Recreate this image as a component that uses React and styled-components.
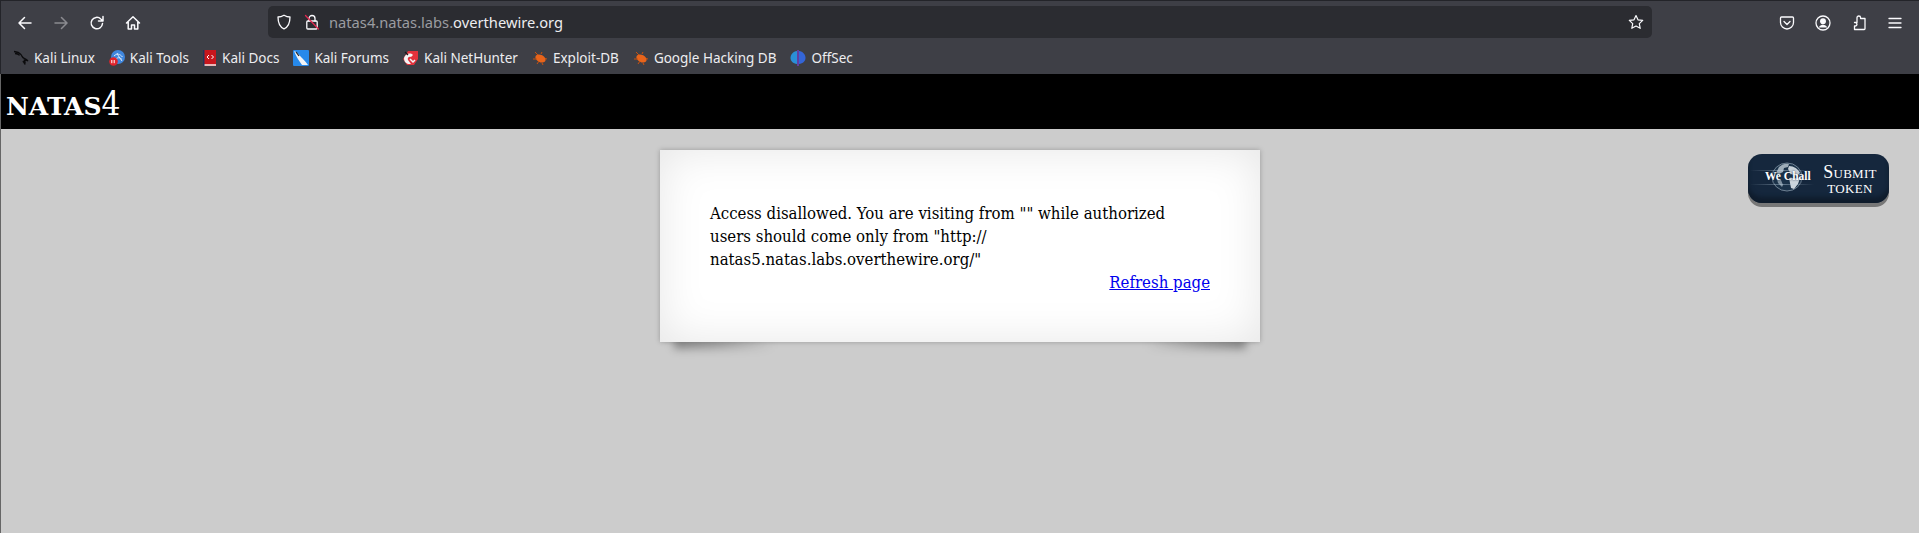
import React from 'react'
import styled, { createGlobalStyle } from 'styled-components'

const Global = createGlobalStyle`
  html, body { margin: 0; padding: 0; height: 100%; background: #ccc; overflow: hidden; }
  #root { height: 100%; }
`

const bookmarks = [
  { name: 'Kali Linux', icon: <KaliIcon /> },
  { name: 'Kali Tools', icon: <ToolsIcon /> },
  { name: 'Kali Docs', icon: <DocsIcon /> },
  { name: 'Kali Forums', icon: <ForumsIcon /> },
  { name: 'Kali NetHunter', icon: <HunterIcon /> },
  { name: 'Exploit-DB', icon: <BugIcon /> },
  { name: 'Google Hacking DB', icon: <BugIcon /> },
  { name: 'OffSec', icon: <OffSecIcon /> },
]

function KaliIcon() {
  return (
    <svg width="16" height="16" viewBox="0 0 16 16" fill="none" stroke="#0b0b0d" strokeWidth="1.3">
      <path d="M1 1.5c3 .3 5.5 1.300 7 3.200 1.200 1.600 1.400 3 3.200 3.700 1.400.6 2.800 1 3.800 2.600-1.400-.8-2.600-1-3.600-.8.8 1.200 1 2.600.4 4.300-.2-1.500-.8-2.600-2-3.400" />
      <path d="M2 3.500c2 .1 3.500.7 4.600 1.900" />
    </svg>
  )
}

function ToolsIcon() {
  return (
    <svg width="16" height="16" viewBox="0 0 16 16">
      <circle cx="9" cy="7" r="7" fill="#3f86dc" />
      <path d="M5 6c3-3 6-2 8.500 1M7 9c2-2 4-1.500 6 .5M8 3c1 3 3 5 5 8" stroke="#d8e8fa" strokeWidth="1" fill="none" />
      <circle cx="4.500" cy="11.500" r="4.300" fill="#e0242c" />
      <path d="M2.800 10v3.200M5.200 10v3.200" stroke="#fff" strokeWidth="1" />
    </svg>
  )
}

function DocsIcon() {
  return (
    <svg width="14" height="16" viewBox="0 0 14 16">
      <rect x="1" y="0" width="12" height="14" fill="#c8161d" />
      <rect x="1" y="14" width="12" height="2" fill="#e8b8b8" />
      <rect x="0" y="0" width="1.500" height="16" fill="#24345c" />
      <path d="M6 5 4 7l2 2M8.500 5l2 2-2 2" stroke="#fff" strokeWidth="1" fill="none" />
    </svg>
  )
}

function ForumsIcon() {
  return (
    <svg width="16" height="16" viewBox="0 0 16 16">
      <rect width="16" height="16" rx="1" fill="#2789ea" />
      <path d="M1 1c3 1 5 4 7 6 2 2 4 4 7 8H9C6 11 3 6 1 1Z" fill="#f2f4f7" />
      <path d="M3 2l3 4" stroke="#222" strokeWidth="1.200" />
    </svg>
  )
}

function HunterIcon() {
  return (
    <svg width="16" height="16" viewBox="0 0 16 16">
      <path d="M5 1h10v8l-4 6H4L0 9Z" fill="#e2323c" />
      <path d="M1 8c1-4 6-6 9-3L8 7C6 6 4 8 5 10l3 4H5C2 13 1 11 1 8Z" fill="#f4f4f4" />
      <path d="M7 9l3 3 2-2" stroke="#f4f4f4" strokeWidth="1.500" fill="none" />
      <path d="M2 2l3 3" stroke="#18181c" strokeWidth="1.200" />
    </svg>
  )
}

function BugIcon() {
  return (
    <svg width="16" height="16" viewBox="0 0 16 16">
      <ellipse cx="8.500" cy="8.500" rx="5.500" ry="3.600" transform="rotate(28 8.500 8.500)" fill="#e8641b" />
      <path d="M3 2l3 3M1 9h4M5 14l2-3M10 13l1 2M15 9l-2-.5M9 4l1-2" stroke="#c9520f" strokeWidth="1" />
    </svg>
  )
}

function OffSecIcon() {
  return (
    <svg width="16" height="16" viewBox="0 0 16 16">
      <path d="M7 1C3 1.500.500 4.500.500 8c0 3 2.500 5.500 6.500 6Z" fill="#2a8fd8" />
      <path d="M9 1c4 .5 6.500 3.500 6.500 7 0 3-2.500 5.500-6.500 6Z" fill="#3465d8" />
      <path d="M8 0v16" stroke="#7a3fe0" strokeWidth="1.200" />
    </svg>
  )
}

function Line({ children, size = 16, sw = 1.500, color = '#fbfbfe' }) {
  return (
    <svg width={size} height={size} viewBox="0 0 16 16" fill="none" stroke={color} strokeWidth={sw} strokeLinecap="round" strokeLinejoin="round">
      {children}
    </svg>
  )
}

function Globe() {
  return (
    <svg width="32" height="30" viewBox="0 0 32 30">
      <ellipse cx="16" cy="15" rx="15" ry="14" fill="#1b3249" stroke="#8496a6" strokeWidth="0.800" />
      <path d="M8 5c3-3 7-4 10-3l-1 3-4 1-1 4-4 2-3-1Z" fill="#9eadb9" />
      <path d="M18 4c5 0 9 3 11 7l-3 3-6-2-3-5Z" fill="#c6d0d8" />
      <path d="M18 16h11l-2 6-4 5-3-1-1-5Z" fill="#cdd6dd" />
      <path d="M6 17l4 1 2 5-1 2-4-4Z" fill="#7f91a0" />
    </svg>
  )
}

export default function App() {
  return (
    <Window>
      <Global />
      <Toolbar>
        <NavButton>
          <Line><path d="M14 8H2.500M7.500 2.500 2 8l5.500 5.500" /></Line>
        </NavButton>
        <NavButton $off>
          <Line><path d="M2 8h11.500M8.500 2.500 14 8l-5.500 5.500" /></Line>
        </NavButton>
        <NavButton>
          <Line><path d="M13.500 8.500a5.700 5.700 0 1 1-1.700-4.500L14 6M14 1.500V6H9.500" /></Line>
        </NavButton>
        <NavButton>
          <Line><path d="M1.500 8 8 1.800 14.500 8M3.200 7v7h3.300v-4h3v4h3.300V7" /></Line>
        </NavButton>
        <UrlBar>
          <UrlIcon>
            <Line sw={1.300}><path d="M8 1.200c2 1.200 4 1.800 6 1.800 0 6-1.500 10-6 11.800C3.500 13 2 9 2 3c2 0 4-.6 6-1.800Z" /></Line>
          </UrlIcon>
          <UrlIcon $narrow>
            <Line sw={1.300}>
              <rect x="2.800" y="7" width="10.400" height="8" rx="1" />
              <path d="M5 7V4.500a3 3 0 0 1 6 0V7" />
              <path d="M1.500 1.500 14.500 15" stroke="#e22850" />
            </Line>
          </UrlIcon>
          <UrlText>natas4.natas.labs.<b>overthewire.org</b></UrlText>
          <Line sw={1.200}><path d="m8 1.500 2 4.300 4.700.6-3.400 3.200.9 4.700L8 12l-4.200 2.300.9-4.700L1.300 6.400 6 5.800Z" /></Line>
        </UrlBar>
        <ToolIcons>
          <Line sw={1.300}><path d="M2.500 2h11c.6 0 1 .4 1 1v4.500c0 3.500-3 6.500-6.500 6.500S1.500 11 1.500 7.500V3c0-.6.400-1 1-1ZM5 6.500l3 3 3-3" /></Line>
          <Line sw={1.300}>
            <circle cx="8" cy="8" r="7" />
            <circle cx="8" cy="6.300" r="2.300" fill="#fbfbfe" />
            <path d="M3.800 12.500c.8-2 2.300-2.800 4.200-2.800s3.400.8 4.200 2.800Z" fill="#fbfbfe" stroke="none" />
          </Line>
          <Line sw={1.300}><path d="M6 3.500V2.800a1.800 1.800 0 0 1 3.600 0v.7H14v10.200c0 .5-.3.800-.8.800H3.500v-3.500h.7a1.700 1.700 0 0 0 0-3.500h-.7V7.500h2.500V3.500Z" /></Line>
          <Line sw={1.300}><path d="M2 3.500h12M2 8h12M2 12.500h12" /></Line>
        </ToolIcons>
      </Toolbar>
      <BookmarkBar>
        {bookmarks.map((b) => (
          <Bookmark key={b.name}>
            <FavIcon>{b.icon}</FavIcon>
            {b.name}
          </Bookmark>
        ))}
      </BookmarkBar>
      <Page>
        <Banner>natas<Digit>4</Digit></Banner>
        <Content>
          <Card>
            Access disallowed. You are visiting from "" while authorized<br />
            users should come only from "http://<br />
            natas5.natas.labs.overthewire.org/"
            <RefreshRow><a href="#refresh">Refresh page</a></RefreshRow>
          </Card>
          <SubmitToken>
            <GlobeMark>
              <Globe />
              <WeChall>We Chall</WeChall>
            </GlobeMark>
            <SubmitLabel>Submit<br />token</SubmitLabel>
          </SubmitToken>
        </Content>
      </Page>
    </Window>
  )
}

const Window = styled.div`
  height: 533px;
  display: flex;
  flex-direction: column;
  overflow: hidden;
`
const Toolbar = styled.div`
  height: 38px;
  box-sizing: border-box;
  padding: 5px 16px 0 16px;
  background: #3e3f46;
  border-top: 1px solid #232429;
  border-left: 1px solid #232429;
  display: flex;
  align-items: flex-start;
`
const NavButton = styled.div`
  width: 36px;
  height: 33px;
  display: flex;
  align-items: center;
  justify-content: flex-start;
  opacity: ${(p) => (p.$off ? 0.4 : 1)};
`
const UrlBar = styled.div`
  width: 1384px;
  height: 32px;
  margin-left: 107px;
  box-sizing: border-box;
  padding: 0 8px;
  background: #2b2c31;
  border-radius: 5px;
  display: flex;
  align-items: center;
  color: #fbfbfe;
`
const UrlIcon = styled.span`
  display: flex;
  width: ${(p) => (p.$narrow ? '25px' : '28px')};
`
const UrlText = styled.span`
  flex: 1;
  font: 14.700px "Noto Sans", sans-serif;
  color: #9b9ca1;
  b { font-weight: 400; color: #ededf0; }
`
const ToolIcons = styled.div`
  flex: 1;
  height: 33px;
  padding-left: 127px;
  display: flex;
  align-items: center;
  gap: 20px;
`
const BookmarkBar = styled.div`
  height: 36px;
  box-sizing: border-box;
  padding: 4px 0 0 12px;
  background: #3e3f46;
  border-left: 1px solid #232429;
  display: flex;
  align-items: center;
  gap: 14px;
`
const Bookmark = styled.div`
  display: flex;
  align-items: center;
  gap: 5px;
  font: 13.500px "Noto Sans", sans-serif;
  color: #ededf0;
  white-space: nowrap;
`
const FavIcon = styled.span`
  display: flex;
`
const Page = styled.div`
  flex: 1;
  display: flex;
  flex-direction: column;
  background: #ccc;
  border-left: 1px solid #666;
`
const Banner = styled.h1`
  margin: 0;
  height: 55px;
  box-sizing: border-box;
  padding: 7px 0 0 5px;
  background: #000;
  color: #fff;
  font: 700 35px/44px "DejaVu Serif", serif;
  font-variant: small-caps;
`
const Digit = styled.span`
  font-weight: 400;
  font-size: 33px;
  font-stretch: condensed;
`
const Content = styled.div`
  position: relative;
  z-index: 0;
  flex: 1;
  padding-top: 21px;
`
const Card = styled.div`
  position: relative;
  width: 600px;
  height: 192px;
  box-sizing: border-box;
  margin-left: 659px;
  padding: 52px 50px 0;
  background: #fff;
  box-shadow: 0 0 5px rgba(0, 0, 0, 0.25), inset 0 0 45px rgba(0, 0, 0, 0.1);
  font: 16.650px/23px "DejaVu Serif", serif;
  font-stretch: condensed;
  color: #000;
  &::before, &::after {
    content: '';
    position: absolute;
    z-index: -1;
    bottom: -7px;
    width: 100px;
    height: 12px;
    filter: blur(4px);
  }
  &::before {
    left: 14px;
    background: linear-gradient(to right, rgba(0, 0, 0, 0.34), rgba(0, 0, 0, 0.22) 45%, transparent);
  }
  &::after {
    right: 14px;
    background: linear-gradient(to left, rgba(0, 0, 0, 0.34), rgba(0, 0, 0, 0.22) 45%, transparent);
  }
`
const RefreshRow = styled.div`
  text-align: right;
  a { color: #00e; }
`
const SubmitToken = styled.div`
  position: absolute;
  top: 25px;
  right: 30px;
  width: 141px;
  height: 49px;
  box-sizing: border-box;
  padding: 8px 8px 0 16px;
  border-radius: 14px;
  background: #15273d;
  box-shadow: inset 0 -6px 4px #0f1c2c, 0 4px 0 #777;
  display: flex;
  align-items: flex-start;
  gap: 9px;
  color: #fff;
`
const GlobeMark = styled.div`
  position: relative;
  width: 46px;
  height: 30px;
  display: flex;
  justify-content: center;
  &::before, &::after {
    content: '';
    position: absolute;
    left: -14px;
    right: -4px;
    height: 1px;
    background: linear-gradient(90deg, transparent, rgba(190, 210, 225, 0.45), transparent);
    z-index: 1;
  }
  &::before { top: 8px; }
  &::after { top: 22px; }
`
const WeChall = styled.span`
  position: absolute;
  z-index: 2;
  top: 8px;
  left: 1px;
  font: 700 11.500px "Liberation Serif", serif;
  white-space: nowrap;
  text-shadow: 0 0 2px #15273d;
`
const SubmitLabel = styled.div`
  flex: 1;
  padding-top: 3px;
  font: 18px/15px "Liberation Serif", serif;
  font-variant: small-caps;
  letter-spacing: 0.300px;
  text-align: center;
`
